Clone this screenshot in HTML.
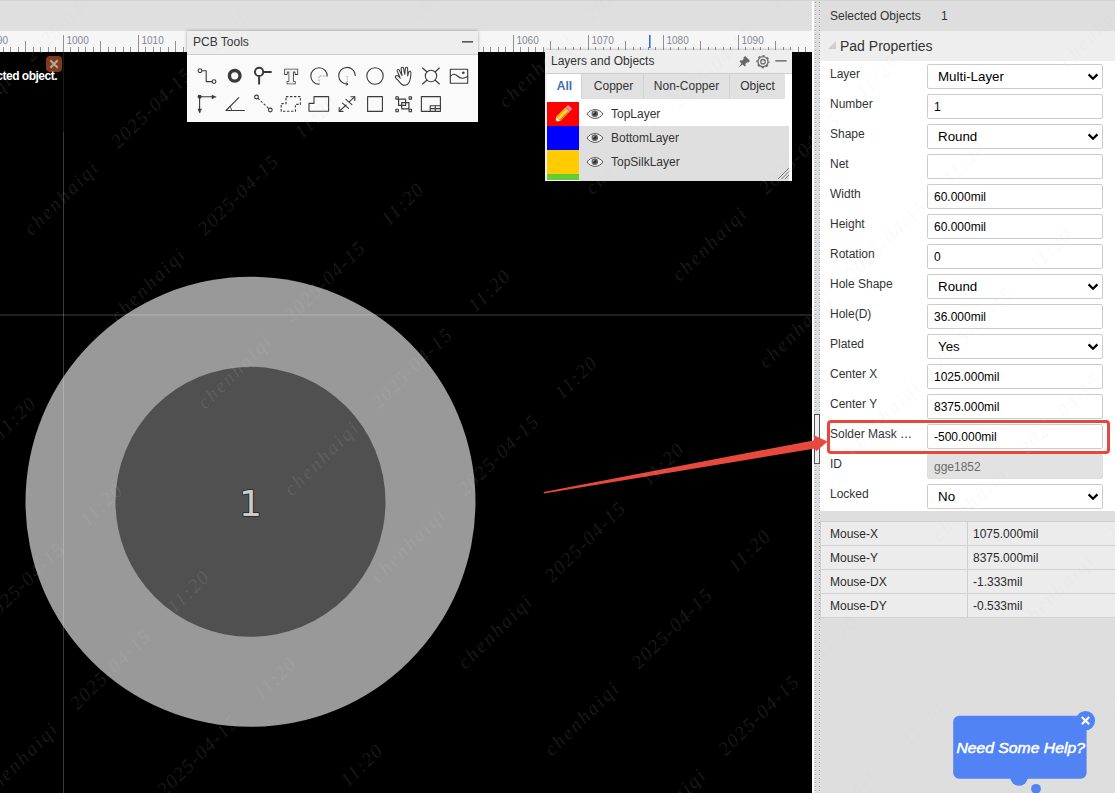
<!DOCTYPE html>
<html lang="en">
<head>
<meta charset="utf-8">
<title>Pad Properties</title>
<style>
*{box-sizing:border-box;margin:0;padding:0}
html,body{width:1117px;height:793px;overflow:hidden;background:#000}
body{position:relative;font-family:"Liberation Sans",Arial,sans-serif;font-size:12px;color:#333}
.abs{position:absolute}
#topbar{left:0;top:0;width:812px;height:31px;background:#dfdfdf}
#ruler{left:0;top:31px;width:812px;height:21px;background:#f6f6f6;overflow:hidden}
#canvas{left:0;top:52px;width:812px;height:741px;background:#000;overflow:hidden}
#whiteline{left:812px;top:0;width:2px;height:793px;background:#fff}
#splitter{left:814px;top:0;width:6px;height:793px;background:#dcdcdc}
#handle{left:814px;top:414px;width:6px;height:50px;border:1px solid #555;background:#efefef}
#rpanel{left:820px;top:0;width:295px;height:793px;background:#dedede}
#rstrip{left:1115px;top:0;width:2px;height:793px;background:#fff}
#selobj{left:0;top:0;width:295px;height:31px;background:#dedede;}
#padhdr{left:0;top:31px;width:295px;height:30px;background:#eeeeee}
#props{left:0;top:61px;width:295px;height:450px;background:#fff}
.lbl{position:absolute;left:10px;font-size:12px;color:#333;line-height:14px;white-space:nowrap}
.inp{position:absolute;left:107px;width:176px;height:25px;border:1px solid #ccc;border-radius:2px;background:#fff;font-size:12px;color:#000;line-height:25px;padding-left:6px;white-space:nowrap}
.sel{font-size:13.33px;padding-left:10px;color:#000;line-height:23px}
.sel svg{position:absolute;right:3px;top:8px}
.dis{background:#e2e2e2;color:#6a6a6a;border-color:#ddd}
#mtable{left:0;top:521px;width:295px;border-top:1px solid #cfcfcf;border-left:1px solid #cfcfcf}
.mrow{position:relative;height:24px;border-bottom:1px solid #d2d2d2;background:#ececec;font-size:12px;line-height:25px;color:#2a2a2a}
.mrow span{position:absolute;top:0}
.mrow .k{left:9px}
.mrow .v{left:152px}
.mrow i{position:absolute;left:146px;top:0;width:1px;height:23px;background:#cfcfcf}
.panel{position:absolute;background:#fafafa;box-shadow:0 0 3px rgba(0,0,0,.35)}
.ptitle{position:absolute;left:0;top:0;right:0;height:24px;background:#eeeeee;border-bottom:1px solid #cfcfcf;font-size:12px;color:#333;line-height:22px;padding-left:6px}
.tab{position:absolute;top:24px;height:25px;background:#e1e1e1;border-right:1px solid #d2d2d2;text-align:center;font-size:12px;line-height:25px;color:#333}
.lname{position:absolute;left:66px;height:24px;line-height:24px;font-size:12px;color:#333}
</style>
</head>
<body>
<div id="topbar" class="abs"></div>
<div id="ruler" class="abs"><svg class="abs" style="left:0;top:0" width="812" height="21" viewBox="0 0 812 21"><g stroke="#8f9196" stroke-width="1" shape-rendering="crispEdges"><path d="M3.5 16V21M10.5 16V21M18.5 16V21M33.5 16V21M40.5 16V21M48.5 16V21M55.5 16V21M70.5 16V21M78.5 16V21M85.5 16V21M93.5 16V21M108.5 16V21M115.5 16V21M123.5 16V21M130.5 16V21M145.5 16V21M153.5 16V21M160.5 16V21M168.5 16V21M183.5 16V21M190.5 16V21M198.5 16V21M205.5 16V21M220.5 16V21M228.5 16V21M235.5 16V21M243.5 16V21M258.5 16V21M265.5 16V21M273.5 16V21M280.5 16V21M295.5 16V21M303.5 16V21M310.5 16V21M318.5 16V21M333.5 16V21M340.5 16V21M348.5 16V21M355.5 16V21M370.5 16V21M378.5 16V21M385.5 16V21M393.5 16V21M408.5 16V21M415.5 16V21M423.5 16V21M430.5 16V21M445.5 16V21M453.5 16V21M460.5 16V21M468.5 16V21M483.5 16V21M490.5 16V21M498.5 16V21M505.5 16V21M520.5 16V21M528.5 16V21M535.5 16V21M543.5 16V21M558.5 16V21M565.5 16V21M573.5 16V21M580.5 16V21M595.5 16V21M603.5 16V21M610.5 16V21M618.5 16V21M633.5 16V21M640.5 16V21M648.5 16V21M655.5 16V21M670.5 16V21M678.5 16V21M685.5 16V21M693.5 16V21M708.5 16V21M715.5 16V21M723.5 16V21M730.5 16V21M745.5 16V21M753.5 16V21M760.5 16V21M768.5 16V21M783.5 16V21M790.5 16V21M798.5 16V21M805.5 16V21M25.5 10V21M100.5 10V21M175.5 10V21M250.5 10V21M325.5 10V21M400.5 10V21M475.5 10V21M550.5 10V21M625.5 10V21M700.5 10V21M775.5 10V21M63.5 4V21M138.5 4V21M213.5 4V21M288.5 4V21M363.5 4V21M438.5 4V21M513.5 4V21M588.5 4V21M663.5 4V21M738.5 4V21" fill="none"/></g><g font-family="Liberation Sans, Arial, sans-serif" font-size="10" fill="#7f8893"><text x="-8.5" y="13">990</text><text x="66.5" y="13">1000</text><text x="141.5" y="13">1010</text><text x="216.5" y="13">1020</text><text x="291.5" y="13">1030</text><text x="366.5" y="13">1040</text><text x="441.5" y="13">1050</text><text x="516.5" y="13">1060</text><text x="591.5" y="13">1070</text><text x="666.5" y="13">1080</text><text x="741.5" y="13">1090</text><text x="816.5" y="13">1100</text></g><rect x="649" y="4" width="1.6" height="13" fill="#2f6fd6"/></svg></div>
<div id="canvas" class="abs"><svg class="abs" style="left:0;top:0" width="812" height="741" viewBox="0 52 812 741">
<circle cx="250.5" cy="501.8" r="225" fill="#999999"/>
<circle cx="250.5" cy="501.8" r="135" fill="#505050"/>
<g shape-rendering="crispEdges"><rect x="63" y="52" width="1" height="741" fill="#fff" fill-opacity=".23"/><rect x="0" y="314" width="812" height="2" fill="#fff" fill-opacity=".13"/></g>
<text x="250.5" y="516" text-anchor="middle" font-family="DejaVu Sans, Verdana, sans-serif" font-size="36" fill="#cccccc" stroke="#222" stroke-width="1.6" paint-order="stroke" stroke-linejoin="round">1</text>
</svg>
<div class="abs" style="left:-40px;top:0;width:104px;height:80px;background:rgba(0,0,0,.55)"></div>
<div class="abs" style="left:46px;top:4px;width:16px;height:16px;border-radius:4px;background:#84391a"><svg width="16" height="16" viewBox="0 0 16 16"><path d="M4.3 4.3L11.7 11.7M11.7 4.3L4.3 11.7" stroke="#a9a9a9" stroke-width="2.2" fill="none"/></svg></div>
<div class="abs" style="left:-200px;top:16px;width:257px;text-align:right;font-size:12px;font-weight:bold;color:#fff;line-height:16px;white-space:nowrap;letter-spacing:-.5px">cted object.</div>
</div>
<div id="whiteline" class="abs"></div>
<div id="splitter" class="abs"><svg class="abs" style="left:0;top:0" width="6" height="793" shape-rendering="crispEdges"><defs><pattern id="dp" width="6" height="4" patternUnits="userSpaceOnUse" y="2"><rect x="1" y="0" width="1" height="1" fill="#9c9c9c"/><rect x="5" y="0" width="1" height="1" fill="#9c9c9c"/><rect x="1" y="1" width="1" height="1" fill="#fff"/><rect x="5" y="1" width="1" height="1" fill="#fff"/></pattern></defs><rect width="6" height="793" fill="url(#dp)"/></svg></div>
<div id="handle" class="abs"></div>
<div id="rpanel" class="abs"><div id="selobj" class="abs"><span class="abs" style="left:10px;top:9px;font-size:12px;line-height:14px;color:#333">Selected Objects</span><span class="abs" style="left:121px;top:9px;font-size:12px;line-height:14px;color:#333">1</span></div>
<div id="padhdr" class="abs"><svg class="abs" style="left:8px;top:10px" width="8" height="8" viewBox="0 0 8 8"><path d="M8 0V8H0Z" fill="#cfcfcf"/></svg><span class="abs" style="left:20px;top:6px;font-size:14px;line-height:18px;color:#333">Pad Properties</span></div>
<div id="props" class="abs">
<div class="lbl" style="top:6px">Layer</div>
<div class="inp sel" style="top:3px">Multi-Layer<svg width="12" height="8" viewBox="0 0 12 8"><path d="M1.6 1.4L6 5.8L10.4 1.4" fill="none" stroke="#000" stroke-width="2.2"/></svg></div>
<div class="lbl" style="top:36px">Number</div>
<div class="inp" style="top:33px">1</div>
<div class="lbl" style="top:66px">Shape</div>
<div class="inp sel" style="top:63px">Round<svg width="12" height="8" viewBox="0 0 12 8"><path d="M1.6 1.4L6 5.8L10.4 1.4" fill="none" stroke="#000" stroke-width="2.2"/></svg></div>
<div class="lbl" style="top:96px">Net</div>
<div class="inp" style="top:93px"></div>
<div class="lbl" style="top:126px">Width</div>
<div class="inp" style="top:123px">60.000mil</div>
<div class="lbl" style="top:156px">Height</div>
<div class="inp" style="top:153px">60.000mil</div>
<div class="lbl" style="top:186px">Rotation</div>
<div class="inp" style="top:183px">0</div>
<div class="lbl" style="top:216px">Hole Shape</div>
<div class="inp sel" style="top:213px">Round<svg width="12" height="8" viewBox="0 0 12 8"><path d="M1.6 1.4L6 5.8L10.4 1.4" fill="none" stroke="#000" stroke-width="2.2"/></svg></div>
<div class="lbl" style="top:246px">Hole(D)</div>
<div class="inp" style="top:243px">36.000mil</div>
<div class="lbl" style="top:276px">Plated</div>
<div class="inp sel" style="top:273px">Yes<svg width="12" height="8" viewBox="0 0 12 8"><path d="M1.6 1.4L6 5.8L10.4 1.4" fill="none" stroke="#000" stroke-width="2.2"/></svg></div>
<div class="lbl" style="top:306px">Center X</div>
<div class="inp" style="top:303px">1025.000mil</div>
<div class="lbl" style="top:336px">Center Y</div>
<div class="inp" style="top:333px">8375.000mil</div>
<div class="lbl" style="top:366px">Solder Mask …</div>
<div class="inp" style="top:363px">-500.000mil</div>
<div class="lbl" style="top:396px">ID</div>
<div class="inp dis" style="top:393px">gge1852</div>
<div class="lbl" style="top:426px">Locked</div>
<div class="inp sel" style="top:423px">No<svg width="12" height="8" viewBox="0 0 12 8"><path d="M1.6 1.4L6 5.8L10.4 1.4" fill="none" stroke="#000" stroke-width="2.2"/></svg></div>
<div class="abs" style="left:7px;top:359px;width:283px;height:34px;border:3px solid #e8473b;border-radius:4px"></div>
</div>
<div id="mtable" class="abs">
<div class="mrow"><span class="k">Mouse-X</span><i></i><span class="v">1075.000mil</span></div>
<div class="mrow"><span class="k">Mouse-Y</span><i></i><span class="v">8375.000mil</span></div>
<div class="mrow"><span class="k">Mouse-DX</span><i></i><span class="v">-1.333mil</span></div>
<div class="mrow"><span class="k">Mouse-DY</span><i></i><span class="v">-0.533mil</span></div>
</div></div>
<div id="rstrip" class="abs"></div>
<div class="abs" style="left:0;top:0;width:1115px;height:1px;background:#d3d3d3"></div>
<div class="panel" style="left:187px;top:31px;width:291px;height:91px">
<div class="ptitle">PCB Tools</div>
<svg class="abs" style="left:274px;top:9px" width="13" height="4"><rect x="1" y="1" width="11" height="1.6" fill="#555"/></svg>
<svg class="abs" style="left:0;top:24px" width="291" height="67" viewBox="187 55 291 67" fill="none" stroke="#3a3a3a" stroke-width="1.1" stroke-linecap="round" stroke-linejoin="round">
<!-- row1 -->
<g><circle cx="200" cy="70.7" r="1.9"/><path d="M202 70.7H206.2V81.6H212"/><circle cx="214" cy="81.6" r="1.9"/></g>
<circle cx="234.7" cy="75.8" r="5.3" stroke-width="3.4"/>
<g stroke-width="2"><circle cx="259.1" cy="71.9" r="4.1"/><path d="M263.4 71.9H271.7M259.1 76.2V84.6" stroke-linecap="butt"/></g>
<g font-family="Liberation Serif, serif" font-weight="bold" font-size="17.8" text-anchor="middle" stroke-linejoin="miter" style="filter:grayscale(1)"><text x="291.2" y="83.3" stroke="#3a3a3a" stroke-width="2.6" fill="#333">T</text><text x="291.2" y="83.3" stroke="#f4f4f4" stroke-width="0.9" fill="#f4f4f4">T</text></g>
<g><path d="M319 84.2A8.2 8.2 0 1 1 327.2 76"/><path d="M319 84.2V76H327.2" stroke-dasharray="1.6 1.4" stroke-linecap="butt" stroke="#8a8a8a" stroke-width=".9"/></g>
<g><path d="M355.3 75.5A8.3 8.3 0 1 0 347.6 84"/><path d="M346.2 82.8L348 84L346.2 85.2" stroke-width="1"/><path d="M347.2 76V82" stroke-dasharray="1.2 1.2" stroke="#999" stroke-linecap="butt"/></g>
<circle cx="375" cy="76" r="8.2"/>
<path stroke-width="1.05" d="M395.4 77.3C395.2 76.2 396.2 75.4 397.2 75.4C398.2 75.5 398.9 76.4 400.3 78.3C399.6 76 397.6 72.4 397.1 70.9C396.8 69.8 398.6 69 399.3 70.2C400 71.6 401.2 74 402 75.5C401.6 73 401.2 70.4 401.1 68.4C401.1 67 403.2 66.9 403.5 68.2C403.9 70 404.4 72.6 404.8 74.5C405 72.4 405.2 70 405.4 68.3C405.6 67 407.5 67 407.6 68.4C407.7 70.6 407.7 73.8 407.7 76C408 74.6 408.4 73 408.8 71.9C409.3 70.8 410.9 71.2 410.9 72.6C410.9 74 410.8 75.4 410.6 77C410.3 79.4 409.8 81.2 409 82.6C408.2 84.2 406.8 85.2 405.2 85.3C403.8 85.4 402.6 84.9 401.6 84.2C400.2 83.2 399.2 81.8 398.1 80.4C397.2 79.3 395.6 78.4 395.4 77.3Z"/>
<g><circle cx="431" cy="76" r="5.7"/><path d="M422.6 68L427 72M439.4 68L435 72M422.6 84L427 80M439.4 84L435 80"/></g>
<g><rect x="450.3" y="69.2" width="17.4" height="14"/><path d="M450.3 76.5C452.5 73.5 455 73.5 457.5 76C460 78.6 463.5 79 467.7 76.5"/><circle cx="463.2" cy="72.8" r="1" fill="#333" stroke-width=".6"/></g>
<!-- row2 -->
<g><circle cx="199.6" cy="96.8" r="1.5" fill="#333"/><path d="M199.6 96.8H213.5M199.6 96.8V110.5"/><path d="M215.8 96.8L212 95.2V98.4ZM199.6 112.8L198 109V109H201.2Z" fill="#333" stroke-width=".6"/></g>
<g><path d="M238.8 97.6L226 110.5H244.4"/><path d="M230 106.6A4.5 4.5 0 0 1 231.6 110.4" stroke-width=".9"/></g>
<g><circle cx="256.5" cy="97" r="1.9"/><circle cx="270.3" cy="110" r="1.9"/><path d="M258 98.4L268.9 108.7" stroke-dasharray="2.2 1.8" stroke-linecap="butt"/></g>
<path d="M286 96.6H300.4V104.4H295.4V111.2H281.2V103.6H286Z" stroke-dasharray="2.4 1.6" stroke-linecap="butt" stroke-linejoin="miter"/>
<path d="M314 96.6H328.6V111.2H309V103.4H314Z"/>
<g><path d="M339.4 111.2L346.2 105M349.4 101.6L354.7 96.8"/><path d="M339.2 107.6V111.4H343M351 96.7H354.8V100.5"/><path d="M342.5 103.2L348.5 108.4M345.9 99.4L351.9 104.7"/></g>
<rect x="367.6" y="96.6" width="14.8" height="14.8"/>
<g stroke-width="1.1"><rect x="395.9" y="96.7" width="2.4" height="2.4"/><rect x="409.1" y="96.7" width="2.4" height="2.4"/><rect x="395.9" y="109.3" width="2.4" height="2.4"/><rect x="409.1" y="109.3" width="2.4" height="2.4"/><rect x="398.6" y="99.2" width="7" height="6.2" stroke-width="1.2"/><rect x="401.7" y="102.6" width="7.2" height="6.2" stroke-width="1.2"/></g>
<g><rect x="421.4" y="96.6" width="19" height="14.8"/><path d="M430.2 105.8H440.4M430.2 108.6H440.4M430.2 105.8V111.4M435.3 105.8V111.4" stroke-width="1.1"/></g>
</svg>
</div>

<div class="panel" style="left:545px;top:50px;width:247px;height:131px;background:#fff;overflow:hidden">
<div class="ptitle" style="height:24px;line-height:23px">Layers and Objects</div>
<svg class="abs" style="left:190px;top:4px" width="54" height="16" viewBox="735 54 54 16">
<g transform="translate(738.2 67.8) rotate(-45) scale(.85)" fill="#686868"><path d="M0 0L7 -0.9V0.9Z"/><path d="M6.6 -4.4C7.6 -4.6 8.4 -4.4 8.8 -3.6L9 -2.6L12.4 -3V-3.4C12.4 -3.9 12.8 -4.1 13.3 -4.1H14.6C15.3 -4.1 15.6 -3.7 15.6 -3.2V3.2C15.6 3.7 15.3 4.1 14.6 4.1H13.3C12.8 4.1 12.4 3.9 12.4 3.4V3L9 2.6L8.8 3.6C8.4 4.4 7.6 4.6 6.6 4.4C6.2 1.6 6.2 -1.6 6.6 -4.4Z"/></g>
<g fill="none" stroke="#6c6c6c"><circle cx="763" cy="61.7" r="5" stroke-width="1.3"/><circle cx="763" cy="61.7" r="6" stroke-width="1.2" stroke-dasharray="2.36 2.352" stroke-dashoffset="1.2"/><circle cx="763" cy="61.7" r="2.2" stroke-width="1.3"/></g>
<rect x="775.3" y="60.1" width="11.4" height="1.5" fill="#707070"/>
</svg>
<div class="abs" style="left:0;top:24px;width:2px;height:107px;background:#efefef"></div>
<div class="abs" style="left:2px;top:24px;width:238px;height:25px;background:#e1e1e1"></div>
<div class="tab" style="left:2px;width:35px;background:#fff;color:#3d6db5;font-weight:bold;padding-left:1px">All</div>
<div class="tab" style="left:37px;width:62px;padding-left:2px">Copper</div>
<div class="tab" style="left:99px;width:86px">Non-Copper</div>
<div class="tab" style="left:185px;width:55px;border-right:none">Object</div>
<div class="abs" style="left:34px;top:76px;width:210px;height:55px;background:#dfdfdf"></div>
<div class="abs" style="left:2px;top:52px;width:32px;height:24px;background:#ff0000"></div>
<div class="abs" style="left:2px;top:76px;width:32px;height:24px;background:#0000ff"></div>
<div class="abs" style="left:2px;top:100px;width:32px;height:24px;background:#ffcc00"></div>
<div class="abs" style="left:2px;top:124px;width:32px;height:6px;background:#66cc33"></div>
<svg class="abs" style="left:2px;top:52px" width="32" height="24" viewBox="547 102 32 24">
<g transform="translate(555.2 121.9) rotate(-45)">
<path d="M0 0L4.6 -3V3Z" fill="#f6e3b8"/><path d="M0 0L1.8 -1.2V1.2Z" fill="#333"/>
<rect x="4.6" y="-3" width="11.6" height="6" fill="#f5b400"/><rect x="4.6" y="-1" width="11.6" height="2" fill="#ffd84a"/><rect x="4.6" y="1.6" width="11.6" height="1.4" fill="#d98a00"/>
<rect x="16.2" y="-3" width="1.3" height="6" fill="#c9c9c9"/>
<rect x="17.5" y="-3" width="3.8" height="6" rx="1.2" fill="#f08a8a"/>
</g>
</svg>
<svg class="abs" style="left:41px;top:57.5px" width="18" height="12" viewBox="0 0 18 12"><path d="M1 6C3.2 2.9 6 1.6 9 1.6C12 1.6 14.8 2.9 17 6C14.8 9.1 12 10.4 9 10.4C6 10.4 3.2 9.1 1 6Z" fill="#f2f2f2" stroke="#5a5a5a" stroke-width="1"/><circle cx="8.8" cy="5.7" r="3.3" fill="#666"/><circle cx="8.8" cy="5.7" r="1.7" fill="#2a2a2a"/><circle cx="7.8" cy="4.7" r=".8" fill="#bbb"/></svg><svg class="abs" style="left:41px;top:81.5px" width="18" height="12" viewBox="0 0 18 12"><path d="M1 6C3.2 2.9 6 1.6 9 1.6C12 1.6 14.8 2.9 17 6C14.8 9.1 12 10.4 9 10.4C6 10.4 3.2 9.1 1 6Z" fill="#f2f2f2" stroke="#5a5a5a" stroke-width="1"/><circle cx="8.8" cy="5.7" r="3.3" fill="#666"/><circle cx="8.8" cy="5.7" r="1.7" fill="#2a2a2a"/><circle cx="7.8" cy="4.7" r=".8" fill="#bbb"/></svg><svg class="abs" style="left:41px;top:105.5px" width="18" height="12" viewBox="0 0 18 12"><path d="M1 6C3.2 2.9 6 1.6 9 1.6C12 1.6 14.8 2.9 17 6C14.8 9.1 12 10.4 9 10.4C6 10.4 3.2 9.1 1 6Z" fill="#f2f2f2" stroke="#5a5a5a" stroke-width="1"/><circle cx="8.8" cy="5.7" r="3.3" fill="#666"/><circle cx="8.8" cy="5.7" r="1.7" fill="#2a2a2a"/><circle cx="7.8" cy="4.7" r=".8" fill="#bbb"/></svg>
<div class="lname" style="top:52px">TopLayer</div>
<div class="lname" style="top:76px">BottomLayer</div>
<div class="lname" style="top:100px">TopSilkLayer</div>
<svg class="abs" style="left:231px;top:116px" width="14" height="14" viewBox="0 0 14 14"><path d="M2 13L13 2M5.5 13L13 5.5M9 13L13 9" stroke="#777" stroke-width="1" fill="none"/></svg>
</div>

<svg class="abs" style="left:540px;top:430px" width="292" height="68" viewBox="540 430 292 68"><path d="M543.6 492L814.6 440.2L813.4 435L827.6 441.4L816 451.6L815 448.6L544 493.4Z" fill="#e8493d"/></svg>

<svg class="abs" style="left:950px;top:708px" width="150" height="85" viewBox="950 708 150 85">
<circle cx="1019" cy="777" r="8.8" fill="#5183f5"/>
<circle cx="1036" cy="788.8" r="4.9" fill="#5183f5"/>
<rect x="953.2" y="715.8" width="133.4" height="63" rx="6" fill="#5183f5"/>
<circle cx="1085.5" cy="720.6" r="9.6" fill="#5183f5"/>
<path d="M1081.8 716.9L1089.2 724.3M1089.2 716.9L1081.8 724.3" stroke="#fff" stroke-width="2.1" fill="none"/>
<text x="956.4" y="753.4" font-family="Liberation Sans, Arial, sans-serif" font-style="italic" font-size="14.9" fill="#fff" stroke="#fff" stroke-width=".5" textLength="128.5" lengthAdjust="spacingAndGlyphs">Need Some Help?</text>
</svg>

<svg class="abs" style="left:0;top:0;pointer-events:none" width="1117" height="793" viewBox="0 0 1117 793"><g font-family="Liberation Serif, Noto Serif CJK SC, serif" font-style="italic" font-size="19.5" fill="#cfcfcf" fill-opacity=".13" text-anchor="middle">
<text transform="translate(-25.7 112.1) rotate(-44.5)" y="6" textLength="95" lengthAdjust="spacing">chenhaiqi</text>
<text transform="translate(64.6 21.8) rotate(-44.5)" y="6" textLength="104" lengthAdjust="spacing">2025-04-15</text>
<text transform="translate(142.1 -55.7) rotate(-44.5)" y="6" textLength="50" lengthAdjust="spacing">11:20</text>
<text transform="translate(61.1 198.8) rotate(-44.5)" y="6" textLength="95" lengthAdjust="spacing">chenhaiqi</text>
<text transform="translate(151.3 108.6) rotate(-44.5)" y="6" textLength="104" lengthAdjust="spacing">2025-04-15</text>
<text transform="translate(228.9 31.0) rotate(-44.5)" y="6" textLength="50" lengthAdjust="spacing">11:20</text>
<text transform="translate(14.6 418.9) rotate(-44.5)" y="6" textLength="50" lengthAdjust="spacing">11:20</text>
<text transform="translate(147.9 285.6) rotate(-44.5)" y="6" textLength="95" lengthAdjust="spacing">chenhaiqi</text>
<text transform="translate(238.1 195.4) rotate(-44.5)" y="6" textLength="104" lengthAdjust="spacing">2025-04-15</text>
<text transform="translate(315.7 117.8) rotate(-44.5)" y="6" textLength="50" lengthAdjust="spacing">11:20</text>
<text transform="translate(448.9 -15.5) rotate(-44.5)" y="6" textLength="95" lengthAdjust="spacing">chenhaiqi</text>
<text transform="translate(23.8 583.2) rotate(-44.5)" y="6" textLength="104" lengthAdjust="spacing">2025-04-15</text>
<text transform="translate(101.3 505.7) rotate(-44.5)" y="6" textLength="50" lengthAdjust="spacing">11:20</text>
<text transform="translate(234.6 372.4) rotate(-44.5)" y="6" textLength="95" lengthAdjust="spacing">chenhaiqi</text>
<text transform="translate(324.8 282.1) rotate(-44.5)" y="6" textLength="104" lengthAdjust="spacing">2025-04-15</text>
<text transform="translate(402.4 204.6) rotate(-44.5)" y="6" textLength="50" lengthAdjust="spacing">11:20</text>
<text transform="translate(535.7 71.3) rotate(-44.5)" y="6" textLength="95" lengthAdjust="spacing">chenhaiqi</text>
<text transform="translate(625.9 -19.0) rotate(-44.5)" y="6" textLength="104" lengthAdjust="spacing">2025-04-15</text>
<text transform="translate(20.3 760.2) rotate(-44.5)" y="6" textLength="95" lengthAdjust="spacing">chenhaiqi</text>
<text transform="translate(110.5 670.0) rotate(-44.5)" y="6" textLength="104" lengthAdjust="spacing">2025-04-15</text>
<text transform="translate(188.1 592.4) rotate(-44.5)" y="6" textLength="50" lengthAdjust="spacing">11:20</text>
<text transform="translate(321.4 459.1) rotate(-44.5)" y="6" textLength="95" lengthAdjust="spacing">chenhaiqi</text>
<text transform="translate(411.6 368.9) rotate(-44.5)" y="6" textLength="104" lengthAdjust="spacing">2025-04-15</text>
<text transform="translate(489.2 291.3) rotate(-44.5)" y="6" textLength="50" lengthAdjust="spacing">11:20</text>
<text transform="translate(622.5 158.0) rotate(-44.5)" y="6" textLength="95" lengthAdjust="spacing">chenhaiqi</text>
<text transform="translate(712.7 67.8) rotate(-44.5)" y="6" textLength="104" lengthAdjust="spacing">2025-04-15</text>
<text transform="translate(790.3 -9.8) rotate(-44.5)" y="6" textLength="50" lengthAdjust="spacing">11:20</text>
<text transform="translate(107.1 847.0) rotate(-44.5)" y="6" textLength="95" lengthAdjust="spacing">chenhaiqi</text>
<text transform="translate(197.3 756.7) rotate(-44.5)" y="6" textLength="104" lengthAdjust="spacing">2025-04-15</text>
<text transform="translate(274.9 679.2) rotate(-44.5)" y="6" textLength="50" lengthAdjust="spacing">11:20</text>
<text transform="translate(408.1 545.9) rotate(-44.5)" y="6" textLength="95" lengthAdjust="spacing">chenhaiqi</text>
<text transform="translate(498.4 455.7) rotate(-44.5)" y="6" textLength="104" lengthAdjust="spacing">2025-04-15</text>
<text transform="translate(575.9 378.1) rotate(-44.5)" y="6" textLength="50" lengthAdjust="spacing">11:20</text>
<text transform="translate(709.2 244.8) rotate(-44.5)" y="6" textLength="95" lengthAdjust="spacing">chenhaiqi</text>
<text transform="translate(799.5 154.6) rotate(-44.5)" y="6" textLength="104" lengthAdjust="spacing">2025-04-15</text>
<text transform="translate(877.0 77.0) rotate(-44.5)" y="6" textLength="50" lengthAdjust="spacing">11:20</text>
<text transform="translate(1010.3 -56.3) rotate(-44.5)" y="6" textLength="95" lengthAdjust="spacing">chenhaiqi</text>
<text transform="translate(284.0 843.5) rotate(-44.5)" y="6" textLength="104" lengthAdjust="spacing">2025-04-15</text>
<text transform="translate(361.6 765.9) rotate(-44.5)" y="6" textLength="50" lengthAdjust="spacing">11:20</text>
<text transform="translate(494.9 632.6) rotate(-44.5)" y="6" textLength="95" lengthAdjust="spacing">chenhaiqi</text>
<text transform="translate(585.1 542.4) rotate(-44.5)" y="6" textLength="104" lengthAdjust="spacing">2025-04-15</text>
<text transform="translate(662.7 464.9) rotate(-44.5)" y="6" textLength="50" lengthAdjust="spacing">11:20</text>
<text transform="translate(796.0 331.6) rotate(-44.5)" y="6" textLength="95" lengthAdjust="spacing">chenhaiqi</text>
<text transform="translate(886.2 241.3) rotate(-44.5)" y="6" textLength="104" lengthAdjust="spacing">2025-04-15</text>
<text transform="translate(963.8 163.8) rotate(-44.5)" y="6" textLength="50" lengthAdjust="spacing">11:20</text>
<text transform="translate(1097.1 30.5) rotate(-44.5)" y="6" textLength="95" lengthAdjust="spacing">chenhaiqi</text>
<text transform="translate(448.4 852.7) rotate(-44.5)" y="6" textLength="50" lengthAdjust="spacing">11:20</text>
<text transform="translate(581.7 719.4) rotate(-44.5)" y="6" textLength="95" lengthAdjust="spacing">chenhaiqi</text>
<text transform="translate(671.9 629.2) rotate(-44.5)" y="6" textLength="104" lengthAdjust="spacing">2025-04-15</text>
<text transform="translate(749.5 551.6) rotate(-44.5)" y="6" textLength="50" lengthAdjust="spacing">11:20</text>
<text transform="translate(882.8 418.3) rotate(-44.5)" y="6" textLength="95" lengthAdjust="spacing">chenhaiqi</text>
<text transform="translate(973.0 328.1) rotate(-44.5)" y="6" textLength="104" lengthAdjust="spacing">2025-04-15</text>
<text transform="translate(1050.5 250.5) rotate(-44.5)" y="6" textLength="50" lengthAdjust="spacing">11:20</text>
<text transform="translate(668.4 806.2) rotate(-44.5)" y="6" textLength="95" lengthAdjust="spacing">chenhaiqi</text>
<text transform="translate(758.7 715.9) rotate(-44.5)" y="6" textLength="104" lengthAdjust="spacing">2025-04-15</text>
<text transform="translate(836.2 638.4) rotate(-44.5)" y="6" textLength="50" lengthAdjust="spacing">11:20</text>
<text transform="translate(969.5 505.1) rotate(-44.5)" y="6" textLength="95" lengthAdjust="spacing">chenhaiqi</text>
<text transform="translate(1059.7 414.9) rotate(-44.5)" y="6" textLength="104" lengthAdjust="spacing">2025-04-15</text>
<text transform="translate(1137.3 337.3) rotate(-44.5)" y="6" textLength="50" lengthAdjust="spacing">11:20</text>
<text transform="translate(845.4 802.7) rotate(-44.5)" y="6" textLength="104" lengthAdjust="spacing">2025-04-15</text>
<text transform="translate(923.0 725.1) rotate(-44.5)" y="6" textLength="50" lengthAdjust="spacing">11:20</text>
<text transform="translate(1056.3 591.8) rotate(-44.5)" y="6" textLength="95" lengthAdjust="spacing">chenhaiqi</text>
<text transform="translate(1146.5 501.6) rotate(-44.5)" y="6" textLength="104" lengthAdjust="spacing">2025-04-15</text>
<text transform="translate(1009.7 811.9) rotate(-44.5)" y="6" textLength="50" lengthAdjust="spacing">11:20</text>
<text transform="translate(1143.0 678.6) rotate(-44.5)" y="6" textLength="95" lengthAdjust="spacing">chenhaiqi</text>
</g></svg>
</body>
</html>
